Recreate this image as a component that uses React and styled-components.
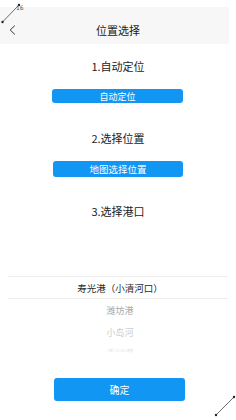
import React, { useState } from 'react';
import styled, { createGlobalStyle } from 'styled-components';

const GlobalStyle = createGlobalStyle`
  html, body {
    margin: 0;
    padding: 0;
    background: #ffffff;
  }
  body {
    font-family: "Noto Sans CJK SC", "Noto Sans", sans-serif;
  }
`;

const Page = styled.div`
  position: relative;
  width: 236px;
  height: 420px;
  overflow: hidden;
  background: #ffffff;
`;

const Content = styled.div`
  width: 236px;
  padding-top: 7px;
  display: flex;
  flex-direction: column;
  align-items: center;
`;

const Header = styled.div`
  align-self: flex-start;
  width: 229px;
  height: 37px;
  box-sizing: border-box;
  padding-left: 7px;
  background: #f7f7f7;
  display: flex;
  align-items: center;
  justify-content: center;
  position: relative;
`;

const BackIcon = styled.svg`
  position: absolute;
  left: 9px;
  top: 18px;
`;

const Title = styled.div`
  font-size: 11px;
  color: #222;
  margin-top: 8px;
`;

const StepTitle = styled.div`
  font-size: 11px;
  color: #222;
  line-height: 16px;
  margin-top: ${(p) => p.top}px;
`;

const BlueButton = styled.button`
  width: ${(p) => p.w}px;
  height: ${(p) => p.h}px;
  margin-top: ${(p) => p.top}px;
  margin-left: ${(p) => p.shift || 0}px;
  background: #1296f3;
  color: #ffffff;
  border: none;
  border-radius: 3px;
  padding: 0;
  font-family: inherit;
  font-size: ${(p) => p.fs}px;
  display: flex;
  align-items: center;
  justify-content: center;
  cursor: pointer;
`;

const Picker = styled.div`
  width: 220px;
  margin-top: 57px;
  display: flex;
  flex-direction: column;
`;

const SelectBand = styled.div`
  height: 21px;
  border-top: 1px solid #ececec;
  border-bottom: 1px solid #ececec;
  display: flex;
  align-items: center;
  justify-content: center;
`;

const Item = styled.div`
  height: ${(p) => p.h || 22}px;
  display: flex;
  align-items: center;
  justify-content: center;
  margin-left: 4px;
  font-size: ${(p) => (p.selected ? 9.5 : 9)}px;
  color: ${(p) => p.color};
  transform: scaleY(${(p) => p.squash || 1});
`;

const Marker = styled.svg`
  position: absolute;
  pointer-events: none;
`;

const MarkerText = styled.span`
  position: absolute;
  left: 16px;
  top: 4px;
  font-family: "DejaVu Sans", sans-serif;
  font-size: 6px;
  color: #555;
`;

const ports = ['寿光港（小清河口）', '潍坊港', '小岛河', '羊口港'];
const fade = ['#2a2a2a', '#a8a8a8', '#cdcdcd', '#e4e4e4'];

export default function App() {
  const [port] = useState(0);

  return (
    <Page>
      <GlobalStyle />
      <Content>
        <Header>
          <BackIcon width="7" height="10" viewBox="0 0 7 10">
            <path d="M5.8 0.6 L1.2 5 L5.8 9.4" fill="none" stroke="#333" strokeWidth="1" />
          </BackIcon>
          <Title>位置选择</Title>
        </Header>

        <StepTitle top={14}>1.自动定位</StepTitle>
        <BlueButton w={131} h={14} top={15} shift={-1} fs={9}>自动定位</BlueButton>

        <StepTitle top={27}>2.选择位置</StepTitle>
        <BlueButton w={130} h={16} top={15} shift={0} fs={9.5}>地图选择位置</BlueButton>

        <StepTitle top={26}>3.选择港口</StepTitle>

        <Picker>
          <SelectBand>
            <Item selected color={fade[0]}>{ports[port]}</Item>
          </SelectBand>
          {ports.slice(1).map((p, i) => (
            <Item
              key={p}
              color={fade[i + 1]}
              h={i === 2 ? 16 : 22}
              squash={i === 2 ? 0.35 : 1}
            >
              {p}
            </Item>
          ))}
        </Picker>

        <BlueButton w={131} h={23} top={19} shift={3} fs={10}>确定</BlueButton>
      </Content>

      <Marker width="24" height="24" viewBox="0 0 24 24" style={{ left: 0, top: 1 }}>
        <line x1="2.5" y1="21" x2="19" y2="4" stroke="#444" strokeWidth="0.8" />
        <circle cx="2.5" cy="21" r="1.2" fill="#222" />
        <circle cx="19" cy="4" r="1.2" fill="#222" />
      </Marker>
      <MarkerText>16</MarkerText>
      <Marker width="24" height="24" viewBox="0 0 24 24" style={{ left: 213, top: 394 }}>
        <line x1="3" y1="21" x2="21" y2="3" stroke="#444" strokeWidth="0.8" />
        <circle cx="3" cy="21" r="1.2" fill="#222" />
        <circle cx="21" cy="3" r="1.2" fill="#222" />
      </Marker>
    </Page>
  );
}
